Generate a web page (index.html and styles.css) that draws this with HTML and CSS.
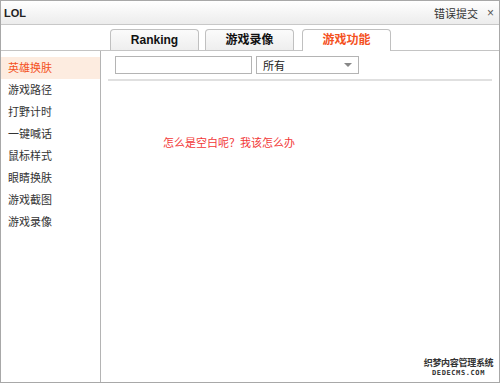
FILE: index.html
```html
<!DOCTYPE html>
<html lang="zh-CN">
<head>
    <meta charset="UTF-8">
    <title>LOL</title>
    <link rel="stylesheet" href="styles.css">
</head>
<body>
    <div class="window">
        <div class="titlebar">
            <div class="title">LOL</div>
            <div class="title-tools">
                <span class="report">错误提交</span>
                <span class="close">×</span>
            </div>
        </div>

        <div class="tabs">
            <div class="tab">Ranking</div>
            <div class="tab">游戏录像</div>
            <div class="tab active">游戏功能</div>
        </div>

        <div class="main">
            <ul class="sidebar">
                <li class="active">英雄换肤</li>
                <li>游戏路径</li>
                <li>打野计时</li>
                <li>一键喊话</li>
                <li>鼠标样式</li>
                <li>眼睛换肤</li>
                <li>游戏截图</li>
                <li>游戏录像</li>
            </ul>

            <div class="content">
                <div class="toolbar">
                    <input type="text" class="search">
                    <div class="select">
                        <span>所有</span>
                        <span class="arrow"></span>
                    </div>
                </div>
                <div class="empty">怎么是空白呢？我该怎么办</div>
                <div class="watermark">
                    <div class="wm-cn">织梦内容管理系统</div>
                    <div class="wm-en">DEDECMS.COM</div>
                </div>
            </div>
        </div>
    </div>
</body>
</html>
```

FILE: styles.css
```css
body {
    margin: 0;
    font-family: "Liberation Sans", "Noto Sans CJK SC", sans-serif;
    font-size: 11px;
    color: #333;
    background: #fff;
}

.window {
    width: 500px;
    height: 383px;
    box-sizing: border-box;
    border: 1px solid #a8a8a8;
    display: flex;
    flex-direction: column;
    overflow: hidden;
}

/* title bar */
.titlebar {
    height: 23px;
    border-bottom: 1px solid #c8c8c8;
    background: linear-gradient(#ffffff, #ececec);
    display: flex;
    align-items: center;
    justify-content: space-between;
    padding: 0 3px;
}

.title {
    font-weight: bold;
    font-size: 11px;
    color: #222;
}

.title-tools {
    display: flex;
    align-items: center;
    gap: 9px;
    color: #333;
}

.report {
    font-size: 11px;
}

.close {
    font-size: 12px;
    color: #555;
    margin-right: 2px;
}

/* tabs */
.tabs {
    height: 25px;
    border-bottom: 1px solid #c4c4c4;
    display: flex;
    align-items: flex-end;
    padding-left: 109px;
    gap: 6px;
}

.tab {
    width: 87px;
    height: 20px;
    border: 1px solid #c0c0c0;
    border-bottom: none;
    border-radius: 4px 4px 0 0;
    background: linear-gradient(#fbfbfb, #eeeeee);
    text-align: center;
    line-height: 21px;
    font-size: 12px;
    font-weight: bold;
    color: #111;
}

.tab.active {
    background: #fff;
    color: #f4511e;
    margin-left: 2px;
    height: 21px;
    margin-bottom: -1px;
}

/* main */
.main {
    flex: 1;
    display: flex;
}

.sidebar {
    width: 99px;
    margin: 0;
    padding: 6px 0 0;
    list-style: none;
    border-right: 1px solid #b4b4b4;
}

.sidebar li {
    height: 22px;
    line-height: 22px;
    padding-left: 7px;
    color: #333;
}

.sidebar li.active {
    background: #fdece0;
    color: #f4511e;
}

.content {
    flex: 1;
    position: relative;
    padding: 5px 7px 0 7px;
}

.toolbar {
    display: flex;
    gap: 4px;
    padding: 0 0 5px 7px;
    border-bottom: 2px solid #e0e0e0;
}

.search {
    width: 137px;
    height: 18px;
    box-sizing: border-box;
    border: 1px solid #b4b4b4;
    margin: 0;
    padding: 0;
}

.select {
    width: 103px;
    height: 18px;
    box-sizing: border-box;
    border: 1px solid #b4b4b4;
    display: flex;
    align-items: center;
    justify-content: space-between;
    padding: 0 6px;
    color: #222;
}

.arrow {
    width: 0;
    height: 0;
    border-left: 4px solid transparent;
    border-right: 4px solid transparent;
    border-top: 4px solid #888;
}

.empty {
    margin: 53px 0 0 55px;
    color: #f23838;
    font-size: 11px;
}

.watermark {
    position: absolute;
    right: 5px;
    bottom: 5px;
    width: 71px;
    text-align: center;
    color: #333;
}

.wm-cn {
    font-size: 9px;
    font-weight: bold;
    line-height: 11px;
    letter-spacing: -0.3px;
}

.wm-en {
    font-family: "DejaVu Sans Mono", monospace;
    font-size: 7px;
    font-weight: bold;
    line-height: 8px;
    letter-spacing: 0.6px;
}
```
